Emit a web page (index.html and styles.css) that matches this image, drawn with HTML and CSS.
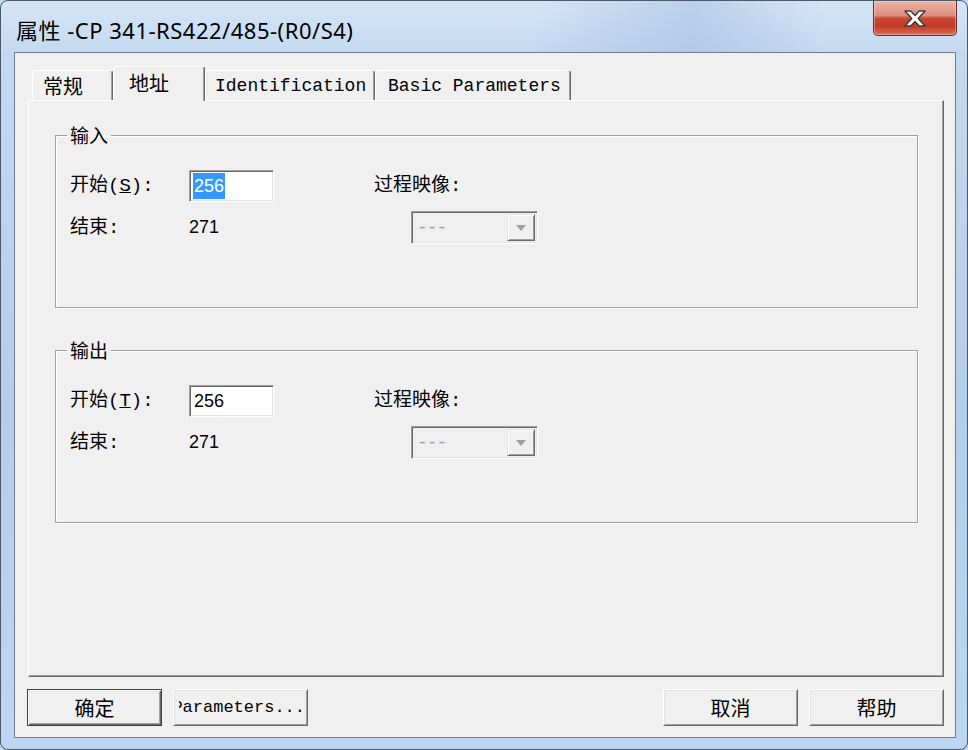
FILE: index.html
```html
<!DOCTYPE html>
<html lang="zh-CN">
<head>
    <meta charset="UTF-8">
    <meta name="viewport" content="width=device-width, initial-scale=1.0">
    <title>属性 -CP 341-RS422/485-(R0/S4)</title>
    <link rel="stylesheet" href="styles.css">
</head>
<body>
    <div class="window">
        <div class="titlebar">
            <span class="title">属性 -CP 341-RS422/485-(R0/S4)</span>
            <button class="close" title="关闭">
                <svg width="24" height="17" viewBox="0 0 22 16">
                    <polygon points="1.5,1 7,1 11,5.2 15,1 20.5,1 14,8 20.5,15 15,15 11,10.8 7,15 1.5,15 8,8" fill="#fff" stroke="#3c3c3c" stroke-width="1.3" stroke-linejoin="round"/>
                </svg>
            </button>
        </div>

        <div class="client">
            <div class="tabs">
                <div class="tab tab-general">常规</div>
                <div class="tab tab-address active">地址</div>
                <div class="tab tab-ident">Identification</div>
                <div class="tab tab-params">Basic Parameters</div>
            </div>

            <div class="panel">
                <fieldset class="group">
                    <legend>输入</legend>
                    <div class="fields">
                        <span class="label">开始(<u>S</u>):</span>
                        <div class="edit"><span class="selected">256</span></div>
                        <span class="label">过程映像:</span>
                        <span class="label">结束:</span>
                        <span class="value">271</span>
                        <div class="combo">
                            <span class="combo-text">---</span>
                            <span class="combo-btn">
                                <svg width="10" height="6" viewBox="0 0 10 6"><polygon points="0,0 10,0 5,6" fill="#a0a0a0"/></svg>
                            </span>
                        </div>
                    </div>
                </fieldset>

                <fieldset class="group">
                    <legend>输出</legend>
                    <div class="fields">
                        <span class="label">开始(<u>T</u>):</span>
                        <div class="edit"><span>256</span></div>
                        <span class="label">过程映像:</span>
                        <span class="label">结束:</span>
                        <span class="value">271</span>
                        <div class="combo">
                            <span class="combo-text">---</span>
                            <span class="combo-btn">
                                <svg width="10" height="6" viewBox="0 0 10 6"><polygon points="0,0 10,0 5,6" fill="#a0a0a0"/></svg>
                            </span>
                        </div>
                    </div>
                </fieldset>
            </div>

            <div class="actions">
                <button class="btn default">确定</button>
                <button class="btn btn-clip"><span class="clip-box"><span>Parameters...</span></span></button>
                <span class="spacer"></span>
                <button class="btn">取消</button>
                <button class="btn">帮助</button>
            </div>
        </div>
    </div>
</body>
</html>
```

FILE: styles.css
```css
body {
    margin: 0;
    background-color: #bcd4ee;
    font-family: "Noto Sans CJK SC", sans-serif;
    color: #000;
}

.window {
    box-sizing: border-box;
    width: 968px;
    height: 750px;
    display: flex;
    flex-direction: column;
    padding: 0 11px 11px 13px;
    border: 1px solid #4b5a6b;
    border-radius: 8px;
    background: linear-gradient(to bottom, #d5e5f7 0, #c4d9f0 52px, #b4cdea 55%, #bdd7f3 100%);
}

.titlebar {
    height: 51px;
    flex-shrink: 0;
    display: flex;
    align-items: flex-start;
    justify-content: space-between;
    background: linear-gradient(90deg, transparent 55%, rgba(140, 172, 210, 0.35) 72%, transparent 86%);
}

.title {
    margin: 15px 0 0 2px;
    font-family: "Noto Sans", "Noto Sans CJK SC", sans-serif;
    font-size: 22px;
    line-height: 28px;
    letter-spacing: 0.5px;
}

.close {
    width: 84px;
    height: 35px;
    margin-right: -1px;
    padding: 0;
    display: flex;
    align-items: center;
    justify-content: center;
    border: 1px solid #6b2a22;
    border-top: none;
    border-radius: 0 0 5px 5px;
    background: linear-gradient(to bottom, #ebb3a7 0%, #de8e7e 42%, #c9452f 52%, #c33b26 75%, #d9725d 100%);
    box-shadow: inset 0 0 0 1px rgba(255, 255, 255, 0.35);
}

.client {
    flex: 1;
    display: flex;
    flex-direction: column;
    min-height: 0;
    padding: 13px 11px 11px 13px;
    background-color: #f0f0f0;
    border: 1px solid #6f7c8a;
}

/* tab strip */
.tabs {
    height: 34px;
    flex-shrink: 0;
    display: flex;
    align-items: flex-end;
    padding-left: 4px;
}

.tab {
    box-sizing: border-box;
    height: 30px;
    display: flex;
    align-items: center;
    border: 1px solid #fff;
    border-right-color: #696969;
    border-bottom: none;
    border-radius: 3px 3px 0 0;
    box-shadow: inset -1px 0 0 #a0a0a0;
    background-color: #f0f0f0;
    font-size: 20px;
    white-space: nowrap;
}

.tab.active {
    position: relative;
    z-index: 1;
    height: 35px;
    margin-bottom: -1px;
    padding-bottom: 3px;
}

.tab-general { width: 81px; padding-left: 10px; }
.tab-address { width: 92px; padding-left: 15px; }
.tab-ident { width: 170px; padding-left: 9px; }
.tab-params { width: 196px; padding-left: 12px; }

.tab-ident,
.tab-params {
    font-family: "Liberation Mono", monospace;
    font-size: 18px;
}

.panel {
    flex: 1;
    padding: 22px 25px 0 26px;
    border: 1px solid;
    border-color: #fff #696969 #696969 #fff;
    box-shadow: inset -1px -1px 0 #a0a0a0;
}

/* group boxes */
.group {
    min-width: 0;
    margin: 0;
    padding: 23px 12px 63px 14px;
    border: 1px solid #a0a0a0;
    box-shadow: 1px 1px 0 #fff, inset 1px 1px 0 #fff;
}

.group + .group {
    margin-top: 30px;
}

.group legend {
    padding: 0 3px;
    margin-left: -3px;
    font-size: 19px;
    line-height: 24px;
}

.fields {
    display: grid;
    grid-template-columns: 119px 185px auto;
    grid-template-rows: 32px 33px;
    row-gap: 9px;
    align-items: center;
    justify-items: start;
}

.label {
    font-family: "Liberation Mono", "Noto Sans CJK SC", monospace;
    font-size: 19px;
    line-height: 24px;
}

.value {
    font-family: "Liberation Sans", sans-serif;
    font-size: 18px;
}

.edit {
    box-sizing: border-box;
    width: 85px;
    height: 32px;
    display: flex;
    align-items: center;
    padding-left: 3px;
    background-color: #fff;
    border: 1px solid;
    border-color: #a0a0a0 #fff #fff #a0a0a0;
    box-shadow: inset 1px 1px 0 #696969, inset -1px -1px 0 #e3e3e3;
    font-family: "Liberation Sans", sans-serif;
    font-size: 18px;
    line-height: 26px;
}

.edit span {
    padding: 0 1px;
}

.edit .selected {
    background-color: #3399ff;
    color: #fff;
}

.combo {
    box-sizing: border-box;
    width: 127px;
    height: 33px;
    margin-left: 37px;
    display: flex;
    align-items: center;
    padding: 2px;
    background-color: #f0f0f0;
    border: 1px solid;
    border-color: #a0a0a0 #fff #fff #a0a0a0;
    box-shadow: inset 1px 1px 0 #696969, inset -1px -1px 0 #e3e3e3;
}

.combo-text {
    padding-left: 3px;
    color: #a0a0a0;
    font-family: "Liberation Mono", monospace;
    font-size: 18px;
    letter-spacing: -1px;
}

.combo-btn {
    box-sizing: border-box;
    width: 28px;
    height: 100%;
    margin-left: auto;
    display: flex;
    align-items: center;
    justify-content: center;
    border: 1px solid;
    border-color: #e3e3e3 #696969 #696969 #e3e3e3;
    box-shadow: inset 1px 1px 0 #fff, inset -1px -1px 0 #a0a0a0;
}

/* dialog buttons */
.actions {
    height: 37px;
    flex-shrink: 0;
    display: flex;
    gap: 11px;
    margin: 12px 0 0 -1px;
}

.spacer {
    flex: 1;
}

.btn {
    box-sizing: border-box;
    width: 135px;
    height: 37px;
    padding: 0;
    background-color: #f0f0f0;
    border: 1px solid;
    border-color: #fff #696969 #696969 #fff;
    box-shadow: inset 1px 1px 0 #e3e3e3, inset -1px -1px 0 #a0a0a0;
    font-family: "Noto Sans CJK SC", sans-serif;
    font-size: 20px;
    color: #000;
}

.btn.default {
    border: 1px solid #404040;
    box-shadow: inset 1px 1px 0 #fff, inset -1px -1px 0 #696969, inset 2px 2px 0 #e3e3e3, inset -2px -2px 0 #a0a0a0;
}

/* the caption is wider than the button, so its left edge gets clipped */
.btn-clip {
    display: flex;
    align-items: center;
    padding: 0 2px 0 5px;
    font-family: "Liberation Mono", monospace;
    font-size: 17px;
    white-space: nowrap;
}

.clip-box {
    flex: 1;
    display: flex;
    justify-content: flex-end;
    overflow: hidden;
}

.clip-box span {
    flex-shrink: 0;
}
```
